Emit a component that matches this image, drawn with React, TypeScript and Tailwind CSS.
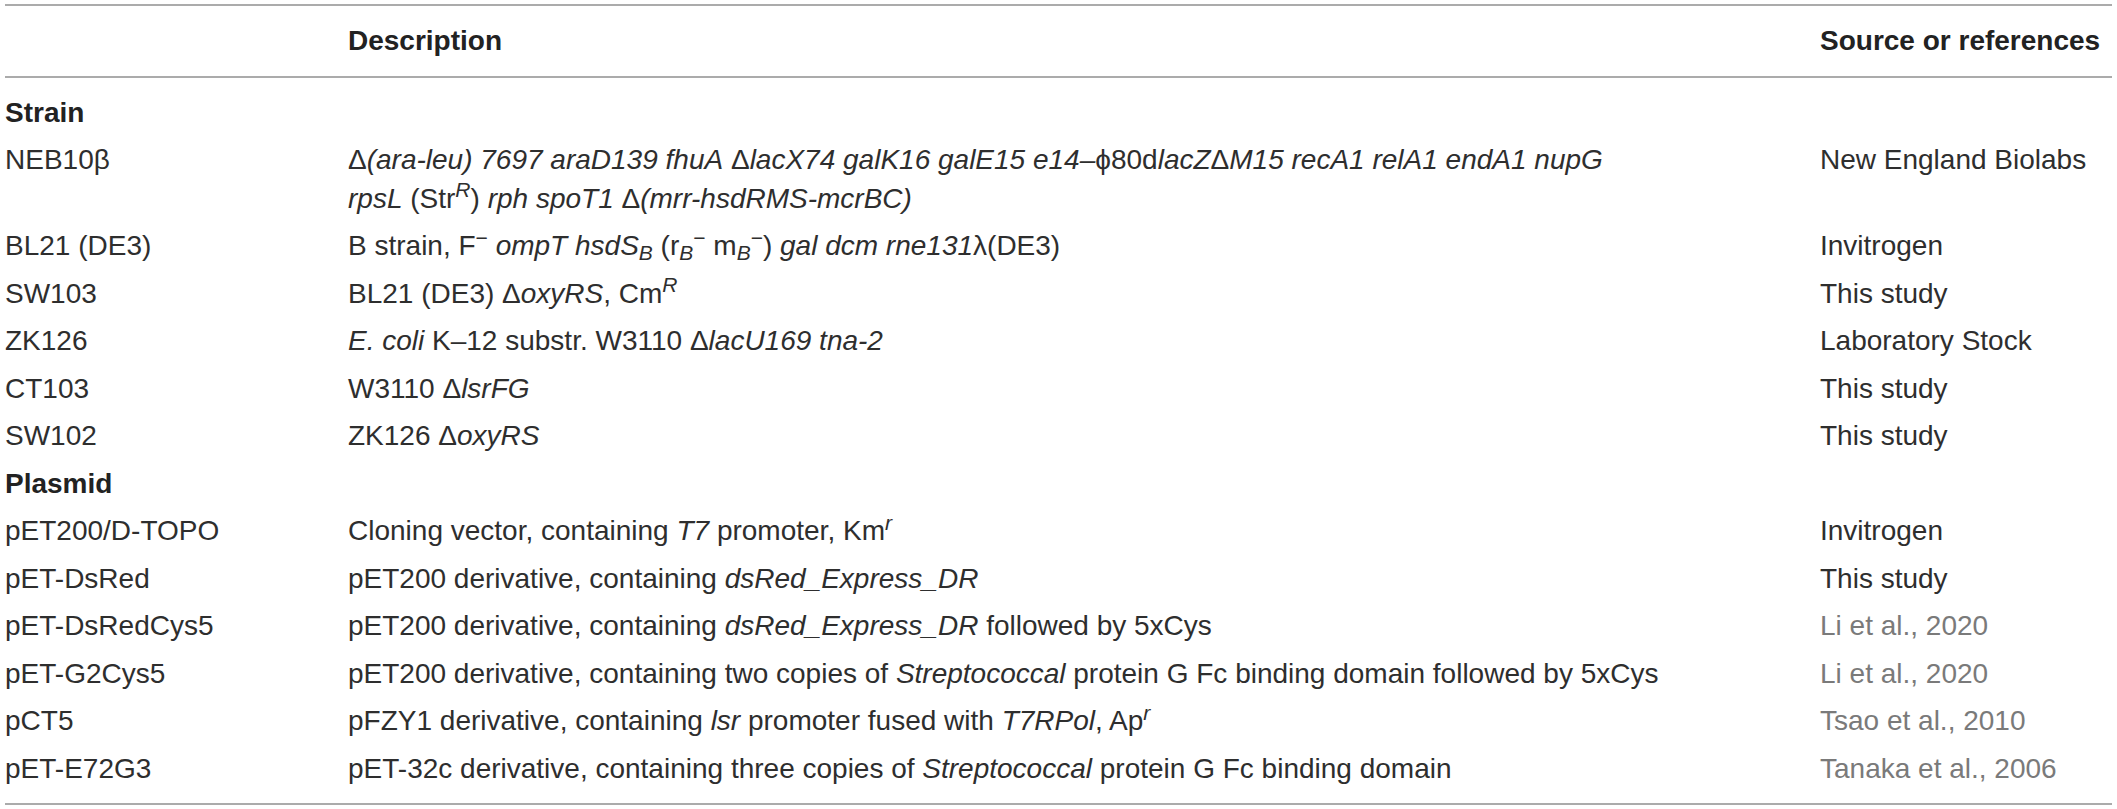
import React from "react";

type Row = {
  name: React.ReactNode;
  desc?: React.ReactNode;
  src?: string;
  gray?: boolean;
  section?: boolean;
};

const I = ({ children }: { children: React.ReactNode }) => <i className="italic">{children}</i>;

const rows: Row[] = [
  { name: "Strain", section: true },
  {
    name: "NEB10β",
    desc: (
      <>
        Δ<I>(ara-leu) 7697 araD139 fhuA</I> Δ<I>lacX74 galK16 galE15 e14–</I>ϕ80d<I>lacZ</I>Δ<I>M15 recA1 relA1 endA1 nupG</I>
        <br />
        <I>rpsL</I> (Str<sup><I>R</I></sup>) <I>rph spoT1</I> Δ<I>(mrr-hsdRMS-mcrBC)</I>
      </>
    ),
    src: "New England Biolabs",
  },
  {
    name: "BL21 (DE3)",
    desc: (
      <>
        B strain, F<sup>−</sup> <I>ompT hsdS</I>
        <sub>
          <I>B</I>
        </sub>{" "}
        (r
        <sub>
          <I>B</I>
        </sub>
        <sup>−</sup> m
        <sub>
          <I>B</I>
        </sub>
        <sup>−</sup>) <I>gal dcm rne131</I>λ(DE3)
      </>
    ),
    src: "Invitrogen",
  },
  {
    name: "SW103",
    desc: (
      <>
        BL21 (DE3) Δ<I>oxyRS</I>, Cm<sup><I>R</I></sup>
      </>
    ),
    src: "This study",
  },
  {
    name: "ZK126",
    desc: (
      <>
        <I>E. coli</I> K–12 substr. W3110 Δ<I>lacU169 tna-2</I>
      </>
    ),
    src: "Laboratory Stock",
  },
  {
    name: "CT103",
    desc: (
      <>
        W3110 Δ<I>lsrFG</I>
      </>
    ),
    src: "This study",
  },
  {
    name: "SW102",
    desc: (
      <>
        ZK126 Δ<I>oxyRS</I>
      </>
    ),
    src: "This study",
  },
  { name: "Plasmid", section: true },
  {
    name: "pET200/D-TOPO",
    desc: (
      <>
        Cloning vector, containing <I>T7</I> promoter, Km<sup><I>r</I></sup>
      </>
    ),
    src: "Invitrogen",
  },
  {
    name: "pET-DsRed",
    desc: (
      <>
        pET200 derivative, containing <I>dsRed_Express_DR</I>
      </>
    ),
    src: "This study",
  },
  {
    name: "pET-DsRedCys5",
    desc: (
      <>
        pET200 derivative, containing <I>dsRed_Express_DR</I> followed by 5xCys
      </>
    ),
    src: "Li et al., 2020",
    gray: true,
  },
  {
    name: "pET-G2Cys5",
    desc: (
      <>
        pET200 derivative, containing two copies of <I>Streptococcal</I> protein G Fc binding domain followed by 5xCys
      </>
    ),
    src: "Li et al., 2020",
    gray: true,
  },
  {
    name: "pCT5",
    desc: (
      <>
        pFZY1 derivative, containing <I>lsr</I> promoter fused with <I>T7RPol</I>, Ap<sup><I>r</I></sup>
      </>
    ),
    src: "Tsao et al., 2010",
    gray: true,
  },
  {
    name: "pET-E72G3",
    desc: (
      <>
        pET-32c derivative, containing three copies of <I>Streptococcal</I> protein G Fc binding domain
      </>
    ),
    src: "Tanaka et al., 2006",
    gray: true,
  },
];

export default function App() {
  return (
    <div className="w-[2117px] h-[809px] bg-white pt-[4px] px-[5px] font-['Liberation_Sans',Arial,sans-serif] text-[28px] text-[#2e2e2e] overflow-hidden">
      <div className="border-t-2 border-b-2 border-[#ababab]">
        <div className="grid grid-cols-[343px_1472px_1fr] pt-[16px] pb-[15.5px] leading-[38.5px] font-bold text-[#222] border-b-2 border-[#ababab] whitespace-nowrap">
          <div></div>
          <div>Description</div>
          <div>Source or references</div>
        </div>
        <div className="pt-[11px] pb-[10px]">
          {rows.map((r, i) => (
            <div
              key={i}
              className="grid grid-cols-[343px_1472px_1fr] py-[4.5px] leading-[38.5px] whitespace-nowrap"
            >
              <div className={r.section ? "font-bold text-[#222]" : ""}>{r.name}</div>
              <div>{r.desc}</div>
              <div className={r.gray ? "text-[#7a7a7a]" : ""}>{r.src}</div>
            </div>
          ))}
        </div>
      </div>
    </div>
  );
}
